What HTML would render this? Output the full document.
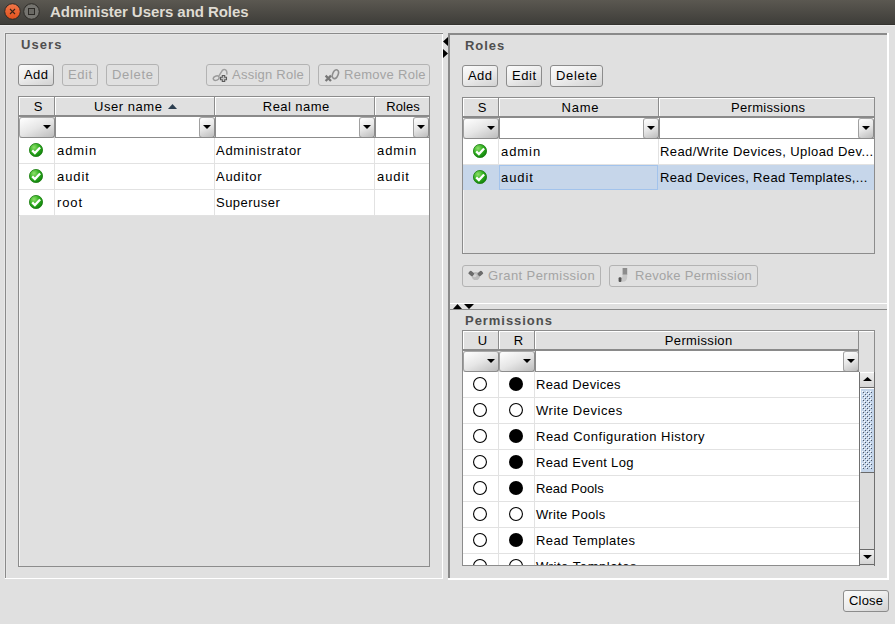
<!DOCTYPE html><html><head><meta charset="utf-8"><title>Administer Users and Roles</title><style>
*{margin:0;padding:0;box-sizing:border-box}
html,body{width:895px;height:624px;overflow:hidden;background:#e0e0e0;position:relative;font-family:"Liberation Sans", sans-serif}
.a{position:absolute}
.t{position:absolute;font-size:13px;line-height:15px;letter-spacing:0.45px;color:#000;white-space:nowrap}
.c{text-align:center}
.dtx{color:#a4a4a4}
.lbl{position:absolute;font-size:13px;line-height:15px;font-weight:bold;letter-spacing:0.8px;color:#4f4f4f;white-space:nowrap}
.btn{position:absolute;border:1px solid #8c8c8c;border-radius:3px;background:linear-gradient(160deg,#fbfbfb 0%,#ededed 45%,#d2d2d2 100%);box-sizing:content-box}
.btn.dis{border-color:#b3b3b3;background:#e0e0e0}
.cb{position:absolute;border:1px solid #8c8c8c;border-top-color:#a8a8a8;border-left-color:#a0a0a0;border-radius:3px;background:linear-gradient(155deg,#ffffff 0%,#e6e6e6 50%,#bcbcbc 100%)}
</style></head><body>
<div class="a" style="left:0px;top:0px;width:895px;height:25px;background:linear-gradient(#5b5851,#3d3c38)"></div>
<div class="a" style="left:0px;top:24px;width:895px;height:1px;background:#34332f"></div>
<div class="a" style="left:0px;top:25px;width:895px;height:1px;background:#ebebeb"></div>
<svg class="a" style="left:4px;top:3px" width="18" height="18" viewBox="0 0 18 18"><defs><linearGradient id="cg" x1="0" y1="0" x2="0" y2="1"><stop offset="0" stop-color="#f0784a"/><stop offset="1" stop-color="#e2501c"/></linearGradient></defs><circle cx="8.5" cy="8.5" r="7.8" fill="url(#cg)" stroke="#2c2a26" stroke-width="1"/><path d="M6 6L11 11M11 6L6 11" stroke="#3a2418" stroke-width="1.1"/></svg>
<svg class="a" style="left:23px;top:3px" width="18" height="18" viewBox="0 0 18 18"><circle cx="8.5" cy="8.5" r="7.8" fill="#75746f" stroke="#2c2a26" stroke-width="1"/><rect x="5.5" y="5.5" width="6" height="6" fill="#6a6964" stroke="#2c2a26" stroke-width="1"/></svg>
<div class="a" style="left:50px;top:3px;font-size:15px;line-height:17px;font-weight:bold;color:#dfdbd2;white-space:nowrap;letter-spacing:-0.06px">Administer Users and Roles</div>
<div class="a" style="left:4px;top:32px;width:439px;height:1px;background:#e8e8e8"></div>
<div class="a" style="left:4px;top:32px;width:1px;height:547px;background:#e8e8e8"></div>
<div class="a" style="left:5px;top:33px;width:438px;height:1px;background:#8a8a8a"></div>
<div class="a" style="left:5px;top:33px;width:1px;height:545px;background:#8a8a8a"></div>
<div class="a" style="left:6px;top:34px;width:436px;height:1px;background:#e6e6e6"></div>
<div class="a" style="left:6px;top:34px;width:1px;height:544px;background:#e6e6e6"></div>
<div class="a" style="left:442px;top:34px;width:1px;height:545px;background:#ffffff"></div>
<div class="a" style="left:5px;top:578px;width:438px;height:1px;background:#ffffff"></div>
<div class="lbl" style="left:21px;top:37px;letter-spacing:1.078px">Users</div>
<div class="btn" style="left:18px;top:64px;width:34px;height:20px;"></div>
<div class="t c" style="left:-113.7345px;width:300px;top:67px;letter-spacing:0.531px;">Add</div>
<div class="btn dis" style="left:62px;top:64px;width:34px;height:20px;"></div>
<div class="t dtx c" style="left:-69.7005px;width:300px;top:67px;letter-spacing:0.599px;">Edit</div>
<div class="btn dis" style="left:106px;top:64px;width:51px;height:20px;"></div>
<div class="t dtx c" style="left:-17.153px;width:300px;top:67px;letter-spacing:0.694px;">Delete</div>
<div class="btn dis" style="left:206px;top:64px;width:102px;height:20px;"></div>
<svg class="a" style="left:212px;top:68px" width="16" height="15" viewBox="0 0 16 15"><ellipse cx="4.2" cy="10.2" rx="3" ry="2.1" transform="rotate(-22 4.2 10.2)" fill="none" stroke="#9a9a9a" stroke-width="1.5"/><path d="M6.8 8.2L10.2 2.6Q11.8 0.9 13.6 1.8Q15.3 3 14.8 6.6" fill="none" stroke="#a0a0a0" stroke-width="1.5"/><path d="M10.3 7.5H12.7V9.3H14.5V11.7H12.7V13.5H10.3V11.7H8.5V9.3H10.3Z" fill="#c4c4c4" stroke="#5a5a5a" stroke-width="1.1"/></svg>
<div class="t dtx" style="left:232px;top:67px;letter-spacing:0.241px;">Assign Role</div>
<div class="btn dis" style="left:318px;top:64px;width:110px;height:20px;"></div>
<svg class="a" style="left:324px;top:68px" width="16" height="15" viewBox="0 0 16 15"><ellipse cx="11.4" cy="6.2" rx="2.7" ry="4.6" transform="rotate(22 11.4 6.2)" fill="none" stroke="#8e8e8e" stroke-width="1.6"/><path d="M1.6 7.6L7 13M7 7.6L1.6 13" stroke="#777" stroke-width="2.3"/></svg>
<div class="t dtx" style="left:344px;top:67px;letter-spacing:0.281px;">Remove Role</div>
<div class="a" style="left:18px;top:96px;width:412px;height:471px;border:1px solid #8c8c8c;background:#e0e0e0"></div>
<div class="a" style="left:19px;top:97px;width:410px;height:1px;background:#ffffff"></div>
<div class="a" style="left:19px;top:97px;width:1px;height:469px;background:#f4f4f4"></div>
<div class="a" style="left:19px;top:97px;width:35px;height:18px;background:#e0e0e0;border-top:1px solid #fff;border-left:1px solid #fff"></div>
<div class="a" style="left:54px;top:97px;width:1px;height:19px;background:#8c8c8c"></div>
<div class="a" style="left:55px;top:97px;width:159px;height:18px;background:#e0e0e0;border-top:1px solid #fff;border-left:1px solid #fff"></div>
<div class="a" style="left:214px;top:97px;width:1px;height:19px;background:#8c8c8c"></div>
<div class="a" style="left:215px;top:97px;width:159px;height:18px;background:#e0e0e0;border-top:1px solid #fff;border-left:1px solid #fff"></div>
<div class="a" style="left:374px;top:97px;width:1px;height:19px;background:#8c8c8c"></div>
<div class="a" style="left:375px;top:97px;width:54px;height:18px;background:#e0e0e0;border-top:1px solid #fff;border-left:1px solid #fff"></div>
<div class="a" style="left:19px;top:115px;width:411px;height:2px;background:#8a8a8a"></div>
<div class="t c" style="left:-112.0px;width:300px;top:99px;letter-spacing:0px;">S</div>
<div class="t c" style="left:-21.7305px;width:300px;top:99px;letter-spacing:0.539px;">User name</div>
<svg class="a" style="left:167.5px;top:104px" width="9" height="5"><path d="M0 5H9L4.5 0Z" fill="#2c3e50"/></svg>
<div class="t c" style="left:146.216px;width:300px;top:99px;letter-spacing:0.432px;">Real name</div>
<div class="t c" style="left:253.0235px;width:300px;top:99px;letter-spacing:0.047px;">Roles</div>
<div class="cb" style="left:19px;top:117px;width:36px;height:21px;"></div>
<svg class="a" style="left:43.0px;top:125px" width="8" height="4"><path d="M0 0H8L4.0 4Z" fill="#000"/></svg>
<div class="a" style="left:55px;top:117px;width:160px;height:21px;background:#fff;border-left:1px solid #8c8c8c;border-bottom:1px solid #8c8c8c"></div>
<div class="cb" style="left:199px;top:117px;width:16px;height:21px;"></div>
<svg class="a" style="left:203.0px;top:125px" width="8" height="4"><path d="M0 0H8L4.0 4Z" fill="#000"/></svg>
<div class="a" style="left:215px;top:117px;width:160px;height:21px;background:#fff;border-left:1px solid #8c8c8c;border-bottom:1px solid #8c8c8c"></div>
<div class="cb" style="left:359px;top:117px;width:16px;height:21px;"></div>
<svg class="a" style="left:363.0px;top:125px" width="8" height="4"><path d="M0 0H8L4.0 4Z" fill="#000"/></svg>
<div class="a" style="left:375px;top:117px;width:54px;height:21px;background:#fff;border-left:1px solid #8c8c8c;border-bottom:1px solid #8c8c8c"></div>
<div class="cb" style="left:413px;top:117px;width:16px;height:21px;"></div>
<svg class="a" style="left:417.0px;top:125px" width="8" height="4"><path d="M0 0H8L4.0 4Z" fill="#000"/></svg>
<div class="a" style="left:19px;top:138px;width:410px;height:26px;background:#fff"></div>
<div class="a" style="left:19px;top:163px;width:410px;height:1px;background:#e2e2e2"></div>
<div class="a" style="left:54px;top:138px;width:1px;height:26px;background:#e2e2e2"></div>
<div class="a" style="left:214px;top:138px;width:1px;height:26px;background:#e2e2e2"></div>
<div class="a" style="left:374px;top:138px;width:1px;height:26px;background:#e2e2e2"></div>
<svg class="a" style="left:29px;top:143px" width="14" height="14" viewBox="0 0 14 14"><defs><radialGradient id="gchk" cx="0.35" cy="0.3" r="0.8"><stop offset="0" stop-color="#8ee06a"/><stop offset="0.5" stop-color="#2eae1e"/><stop offset="1" stop-color="#0a7a0a"/></radialGradient></defs><circle cx="7" cy="7" r="6.6" fill="url(#gchk)" stroke="#1d7d12" stroke-width="0.8"/><path d="M3.2 7.4L5.9 10.1L11.1 4.5" fill="none" stroke="#fff" stroke-width="2.3"/></svg>
<div class="t" style="left:57px;top:143px;letter-spacing:0.934px;">admin</div>
<div class="t" style="left:216px;top:143px;letter-spacing:0.717px;">Administrator</div>
<div class="t" style="left:377px;top:143px;letter-spacing:0.934px;">admin</div>
<div class="a" style="left:19px;top:164px;width:410px;height:26px;background:#fff"></div>
<div class="a" style="left:19px;top:189px;width:410px;height:1px;background:#e2e2e2"></div>
<div class="a" style="left:54px;top:164px;width:1px;height:26px;background:#e2e2e2"></div>
<div class="a" style="left:214px;top:164px;width:1px;height:26px;background:#e2e2e2"></div>
<div class="a" style="left:374px;top:164px;width:1px;height:26px;background:#e2e2e2"></div>
<svg class="a" style="left:29px;top:169px" width="14" height="14" viewBox="0 0 14 14"><defs><radialGradient id="gchk" cx="0.35" cy="0.3" r="0.8"><stop offset="0" stop-color="#8ee06a"/><stop offset="0.5" stop-color="#2eae1e"/><stop offset="1" stop-color="#0a7a0a"/></radialGradient></defs><circle cx="7" cy="7" r="6.6" fill="url(#gchk)" stroke="#1d7d12" stroke-width="0.8"/><path d="M3.2 7.4L5.9 10.1L11.1 4.5" fill="none" stroke="#fff" stroke-width="2.3"/></svg>
<div class="t" style="left:57px;top:169px;letter-spacing:0.922px;">audit</div>
<div class="t" style="left:216px;top:169px;letter-spacing:0.727px;">Auditor</div>
<div class="t" style="left:377px;top:169px;letter-spacing:0.922px;">audit</div>
<div class="a" style="left:19px;top:190px;width:410px;height:26px;background:#fff"></div>
<div class="a" style="left:19px;top:215px;width:410px;height:1px;background:#e2e2e2"></div>
<div class="a" style="left:54px;top:190px;width:1px;height:26px;background:#e2e2e2"></div>
<div class="a" style="left:214px;top:190px;width:1px;height:26px;background:#e2e2e2"></div>
<div class="a" style="left:374px;top:190px;width:1px;height:26px;background:#e2e2e2"></div>
<svg class="a" style="left:29px;top:195px" width="14" height="14" viewBox="0 0 14 14"><defs><radialGradient id="gchk" cx="0.35" cy="0.3" r="0.8"><stop offset="0" stop-color="#8ee06a"/><stop offset="0.5" stop-color="#2eae1e"/><stop offset="1" stop-color="#0a7a0a"/></radialGradient></defs><circle cx="7" cy="7" r="6.6" fill="url(#gchk)" stroke="#1d7d12" stroke-width="0.8"/><path d="M3.2 7.4L5.9 10.1L11.1 4.5" fill="none" stroke="#fff" stroke-width="2.3"/></svg>
<div class="t" style="left:57px;top:195px;letter-spacing:0.88px;">root</div>
<div class="t" style="left:216px;top:195px;letter-spacing:0.486px;">Superuser</div>
<div class="t" style="left:377px;top:195px;letter-spacing:0px;"></div>
<svg class="a" style="left:443px;top:37px" width="5" height="21"><path d="M5 0V9L0 4.5Z M0 12V21L5 16.5Z" fill="#000"/></svg>
<div class="a" style="left:448px;top:33px;width:441px;height:2px;background:#8a8a8a"></div>
<div class="a" style="left:448px;top:33px;width:2px;height:545px;background:#8a8a8a"></div>
<div class="a" style="left:887px;top:33px;width:2px;height:547px;background:#ffffff"></div>
<div class="a" style="left:448px;top:578px;width:441px;height:2px;background:#ffffff"></div>
<div class="lbl" style="left:465px;top:38px;letter-spacing:0.945px">Roles</div>
<div class="btn" style="left:462px;top:65px;width:34px;height:20px;"></div>
<div class="t c" style="left:330.2655px;width:300px;top:68px;letter-spacing:0.531px;">Add</div>
<div class="btn" style="left:506px;top:65px;width:34px;height:20px;"></div>
<div class="t c" style="left:374.2995px;width:300px;top:68px;letter-spacing:0.599px;">Edit</div>
<div class="btn" style="left:550px;top:65px;width:51px;height:20px;"></div>
<div class="t c" style="left:426.847px;width:300px;top:68px;letter-spacing:0.694px;">Delete</div>
<div class="a" style="left:462px;top:97px;width:413px;height:157px;border:1px solid #8c8c8c;background:#e0e0e0"></div>
<div class="a" style="left:463px;top:98px;width:411px;height:1px;background:#ffffff"></div>
<div class="a" style="left:463px;top:98px;width:1px;height:155px;background:#f4f4f4"></div>
<div class="a" style="left:463px;top:98px;width:35px;height:18px;background:#e0e0e0;border-top:1px solid #fff;border-left:1px solid #fff"></div>
<div class="a" style="left:498px;top:98px;width:1px;height:19px;background:#8c8c8c"></div>
<div class="a" style="left:499px;top:98px;width:159px;height:18px;background:#e0e0e0;border-top:1px solid #fff;border-left:1px solid #fff"></div>
<div class="a" style="left:658px;top:98px;width:1px;height:19px;background:#8c8c8c"></div>
<div class="a" style="left:659px;top:98px;width:215px;height:18px;background:#e0e0e0;border-top:1px solid #fff;border-left:1px solid #fff"></div>
<div class="a" style="left:463px;top:116px;width:412px;height:2px;background:#8a8a8a"></div>
<div class="t c" style="left:332.0px;width:300px;top:100px;letter-spacing:0px;">S</div>
<div class="t c" style="left:430.362px;width:300px;top:100px;letter-spacing:0.724px;">Name</div>
<div class="t c" style="left:618.1545px;width:300px;top:100px;letter-spacing:0.309px;">Permissions</div>
<div class="cb" style="left:463px;top:118px;width:36px;height:21px;"></div>
<svg class="a" style="left:487.0px;top:126px" width="8" height="4"><path d="M0 0H8L4.0 4Z" fill="#000"/></svg>
<div class="a" style="left:499px;top:118px;width:160px;height:21px;background:#fff;border-left:1px solid #8c8c8c;border-bottom:1px solid #8c8c8c"></div>
<div class="cb" style="left:643px;top:118px;width:16px;height:21px;"></div>
<svg class="a" style="left:647.0px;top:126px" width="8" height="4"><path d="M0 0H8L4.0 4Z" fill="#000"/></svg>
<div class="a" style="left:659px;top:118px;width:215px;height:21px;background:#fff;border-left:1px solid #8c8c8c;border-bottom:1px solid #8c8c8c"></div>
<div class="cb" style="left:858px;top:118px;width:16px;height:21px;"></div>
<svg class="a" style="left:862.0px;top:126px" width="8" height="4"><path d="M0 0H8L4.0 4Z" fill="#000"/></svg>
<div class="a" style="left:463px;top:139px;width:411px;height:26px;background:#fff"></div>
<div class="a" style="left:463px;top:164px;width:411px;height:1px;background:#e2e2e2"></div>
<div class="a" style="left:498px;top:139px;width:1px;height:26px;background:#e2e2e2"></div>
<div class="a" style="left:658px;top:139px;width:1px;height:26px;background:#e2e2e2"></div>
<svg class="a" style="left:473px;top:144px" width="14" height="14" viewBox="0 0 14 14"><defs><radialGradient id="gchk" cx="0.35" cy="0.3" r="0.8"><stop offset="0" stop-color="#8ee06a"/><stop offset="0.5" stop-color="#2eae1e"/><stop offset="1" stop-color="#0a7a0a"/></radialGradient></defs><circle cx="7" cy="7" r="6.6" fill="url(#gchk)" stroke="#1d7d12" stroke-width="0.8"/><path d="M3.2 7.4L5.9 10.1L11.1 4.5" fill="none" stroke="#fff" stroke-width="2.3"/></svg>
<div class="t" style="left:501px;top:144px;letter-spacing:0.934px;">admin</div>
<div class="t" style="left:660px;top:144px;letter-spacing:0.422px;">Read/Write Devices, Upload Dev...</div>
<div class="a" style="left:463px;top:165px;width:411px;height:25px;background:#c6d6ea"></div>
<div class="a" style="left:499px;top:165px;width:159px;height:25px;border:1px solid #a2c3ec"></div>
<svg class="a" style="left:473px;top:170px" width="14" height="14" viewBox="0 0 14 14"><defs><radialGradient id="gchk" cx="0.35" cy="0.3" r="0.8"><stop offset="0" stop-color="#8ee06a"/><stop offset="0.5" stop-color="#2eae1e"/><stop offset="1" stop-color="#0a7a0a"/></radialGradient></defs><circle cx="7" cy="7" r="6.6" fill="url(#gchk)" stroke="#1d7d12" stroke-width="0.8"/><path d="M3.2 7.4L5.9 10.1L11.1 4.5" fill="none" stroke="#fff" stroke-width="2.3"/></svg>
<div class="t" style="left:501px;top:170px;letter-spacing:0.922px;">audit</div>
<div class="t" style="left:660px;top:170px;letter-spacing:0.355px;">Read Devices, Read Templates,...</div>
<div class="btn dis" style="left:462px;top:265px;width:137px;height:20px;"></div>
<svg class="a" style="left:468px;top:269px" width="16" height="12" viewBox="0 0 16 12"><ellipse cx="7.8" cy="7" rx="4.2" ry="4.1" fill="#bcbcbc"/><ellipse cx="6.6" cy="6.6" rx="2" ry="1.6" fill="#d4d4d4"/><rect x="1.3" y="1.8" width="4" height="5.4" rx="1.2" transform="rotate(-50 3.3 4.5)" fill="#6c6c6c"/><rect x="10.3" y="1.8" width="4" height="5.4" rx="1.2" transform="rotate(50 12.3 4.5)" fill="#6c6c6c"/></svg>
<div class="t dtx" style="left:488px;top:268px;letter-spacing:0.416px;">Grant Permission</div>
<div class="btn dis" style="left:609px;top:265px;width:147px;height:20px;"></div>
<svg class="a" style="left:618px;top:268px" width="10" height="14" viewBox="0 0 10 14"><rect x="4.6" y="0" width="4.6" height="7" fill="#8c8c8c"/><path d="M4.6 6.5H9.2V9Q9.2 13.5 4.5 13.8L2.6 13.8V9.8Q4.6 9.8 4.6 8Z" fill="#c6c6c6"/><rect x="0.6" y="9.2" width="2.8" height="4.8" rx="1" fill="#555"/></svg>
<div class="t dtx" style="left:635px;top:268px;letter-spacing:0.291px;">Revoke Permission</div>
<div class="a" style="left:450px;top:303px;width:437px;height:1px;background:#ffffff"></div>
<div class="a" style="left:450px;top:309px;width:437px;height:1px;background:#8a8a8a"></div>
<svg class="a" style="left:453px;top:304px" width="22" height="5"><path d="M0 5H9L4.5 0Z M11 0H21L16 5Z" fill="#000"/></svg>
<div class="lbl" style="left:465px;top:313px;letter-spacing:0.959px">Permissions</div>
<div class="a" style="left:462px;top:330px;width:413px;height:236px;border:1px solid #8c8c8c;background:#e0e0e0"></div>
<div class="a" style="left:463px;top:331px;width:411px;height:1px;background:#ffffff"></div>
<div class="a" style="left:463px;top:331px;width:1px;height:234px;background:#f4f4f4"></div>
<div class="a" style="left:463px;top:331px;width:35px;height:18px;background:#e0e0e0;border-top:1px solid #fff;border-left:1px solid #fff"></div>
<div class="a" style="left:498px;top:331px;width:1px;height:19px;background:#8c8c8c"></div>
<div class="a" style="left:499px;top:331px;width:35px;height:18px;background:#e0e0e0;border-top:1px solid #fff;border-left:1px solid #fff"></div>
<div class="a" style="left:534px;top:331px;width:1px;height:19px;background:#8c8c8c"></div>
<div class="a" style="left:535px;top:331px;width:323px;height:18px;background:#e0e0e0;border-top:1px solid #fff;border-left:1px solid #fff"></div>
<div class="a" style="left:858px;top:331px;width:1px;height:19px;background:#8c8c8c"></div>
<div class="a" style="left:463px;top:349px;width:396px;height:2px;background:#8a8a8a"></div>
<div class="a" style="left:858px;top:331px;width:1px;height:41px;background:#8c8c8c"></div>
<div class="t c" style="left:332.5px;width:300px;top:333px;letter-spacing:0px;">U</div>
<div class="t c" style="left:368.5px;width:300px;top:333px;letter-spacing:0px;">R</div>
<div class="t c" style="left:548.671px;width:300px;top:333px;letter-spacing:0.342px;">Permission</div>
<div class="cb" style="left:463px;top:351px;width:36px;height:21px;"></div>
<svg class="a" style="left:487.0px;top:359px" width="8" height="4"><path d="M0 0H8L4.0 4Z" fill="#000"/></svg>
<div class="cb" style="left:499px;top:351px;width:36px;height:21px;"></div>
<svg class="a" style="left:523.0px;top:359px" width="8" height="4"><path d="M0 0H8L4.0 4Z" fill="#000"/></svg>
<div class="a" style="left:535px;top:351px;width:323px;height:21px;background:#fff;border-left:1px solid #8c8c8c;border-bottom:1px solid #8c8c8c"></div>
<div class="cb" style="left:843px;top:351px;width:16px;height:21px;"></div>
<svg class="a" style="left:847.0px;top:359px" width="8" height="4"><path d="M0 0H8L4.0 4Z" fill="#000"/></svg>
<div class="a" style="left:463px;top:372px;width:396px;height:193px;overflow:hidden">
<div class="a" style="left:0;top:0px;width:396px;height:26px;background:#fff;border-bottom:1px solid #e2e2e2"></div>
<div class="a" style="left:35px;top:0px;width:1px;height:26px;background:#e2e2e2"></div>
<div class="a" style="left:71px;top:0px;width:1px;height:26px;background:#e2e2e2"></div>
<svg class="a" style="left:10px;top:5px" width="14" height="14"><circle cx="7" cy="7" r="6.45" fill="#fff" stroke="#000" stroke-width="1.1"/></svg>
<svg class="a" style="left:46px;top:5px" width="14" height="14"><circle cx="7" cy="7" r="7" fill="#000"/></svg>
<div class="t" style="left:73px;top:5px;letter-spacing:0.334px">Read Devices</div>
<div class="a" style="left:0;top:26px;width:396px;height:26px;background:#fff;border-bottom:1px solid #e2e2e2"></div>
<div class="a" style="left:35px;top:26px;width:1px;height:26px;background:#e2e2e2"></div>
<div class="a" style="left:71px;top:26px;width:1px;height:26px;background:#e2e2e2"></div>
<svg class="a" style="left:10px;top:31px" width="14" height="14"><circle cx="7" cy="7" r="6.45" fill="#fff" stroke="#000" stroke-width="1.1"/></svg>
<svg class="a" style="left:46px;top:31px" width="14" height="14"><circle cx="7" cy="7" r="6.45" fill="#fff" stroke="#000" stroke-width="1.1"/></svg>
<div class="t" style="left:73px;top:31px;letter-spacing:0.522px">Write Devices</div>
<div class="a" style="left:0;top:52px;width:396px;height:26px;background:#fff;border-bottom:1px solid #e2e2e2"></div>
<div class="a" style="left:35px;top:52px;width:1px;height:26px;background:#e2e2e2"></div>
<div class="a" style="left:71px;top:52px;width:1px;height:26px;background:#e2e2e2"></div>
<svg class="a" style="left:10px;top:57px" width="14" height="14"><circle cx="7" cy="7" r="6.45" fill="#fff" stroke="#000" stroke-width="1.1"/></svg>
<svg class="a" style="left:46px;top:57px" width="14" height="14"><circle cx="7" cy="7" r="7" fill="#000"/></svg>
<div class="t" style="left:73px;top:57px;letter-spacing:0.498px">Read Configuration History</div>
<div class="a" style="left:0;top:78px;width:396px;height:26px;background:#fff;border-bottom:1px solid #e2e2e2"></div>
<div class="a" style="left:35px;top:78px;width:1px;height:26px;background:#e2e2e2"></div>
<div class="a" style="left:71px;top:78px;width:1px;height:26px;background:#e2e2e2"></div>
<svg class="a" style="left:10px;top:83px" width="14" height="14"><circle cx="7" cy="7" r="6.45" fill="#fff" stroke="#000" stroke-width="1.1"/></svg>
<svg class="a" style="left:46px;top:83px" width="14" height="14"><circle cx="7" cy="7" r="7" fill="#000"/></svg>
<div class="t" style="left:73px;top:83px;letter-spacing:0.323px">Read Event Log</div>
<div class="a" style="left:0;top:104px;width:396px;height:26px;background:#fff;border-bottom:1px solid #e2e2e2"></div>
<div class="a" style="left:35px;top:104px;width:1px;height:26px;background:#e2e2e2"></div>
<div class="a" style="left:71px;top:104px;width:1px;height:26px;background:#e2e2e2"></div>
<svg class="a" style="left:10px;top:109px" width="14" height="14"><circle cx="7" cy="7" r="6.45" fill="#fff" stroke="#000" stroke-width="1.1"/></svg>
<svg class="a" style="left:46px;top:109px" width="14" height="14"><circle cx="7" cy="7" r="7" fill="#000"/></svg>
<div class="t" style="left:73px;top:109px;letter-spacing:0.054px">Read Pools</div>
<div class="a" style="left:0;top:130px;width:396px;height:26px;background:#fff;border-bottom:1px solid #e2e2e2"></div>
<div class="a" style="left:35px;top:130px;width:1px;height:26px;background:#e2e2e2"></div>
<div class="a" style="left:71px;top:130px;width:1px;height:26px;background:#e2e2e2"></div>
<svg class="a" style="left:10px;top:135px" width="14" height="14"><circle cx="7" cy="7" r="6.45" fill="#fff" stroke="#000" stroke-width="1.1"/></svg>
<svg class="a" style="left:46px;top:135px" width="14" height="14"><circle cx="7" cy="7" r="6.45" fill="#fff" stroke="#000" stroke-width="1.1"/></svg>
<div class="t" style="left:73px;top:135px;letter-spacing:0.308px">Write Pools</div>
<div class="a" style="left:0;top:156px;width:396px;height:26px;background:#fff;border-bottom:1px solid #e2e2e2"></div>
<div class="a" style="left:35px;top:156px;width:1px;height:26px;background:#e2e2e2"></div>
<div class="a" style="left:71px;top:156px;width:1px;height:26px;background:#e2e2e2"></div>
<svg class="a" style="left:10px;top:161px" width="14" height="14"><circle cx="7" cy="7" r="6.45" fill="#fff" stroke="#000" stroke-width="1.1"/></svg>
<svg class="a" style="left:46px;top:161px" width="14" height="14"><circle cx="7" cy="7" r="7" fill="#000"/></svg>
<div class="t" style="left:73px;top:161px;letter-spacing:0.399px">Read Templates</div>
<div class="a" style="left:0;top:182px;width:396px;height:26px;background:#fff;border-bottom:1px solid #e2e2e2"></div>
<div class="a" style="left:35px;top:182px;width:1px;height:26px;background:#e2e2e2"></div>
<div class="a" style="left:71px;top:182px;width:1px;height:26px;background:#e2e2e2"></div>
<svg class="a" style="left:10px;top:187px" width="14" height="14"><circle cx="7" cy="7" r="6.45" fill="#fff" stroke="#000" stroke-width="1.1"/></svg>
<svg class="a" style="left:46px;top:187px" width="14" height="14"><circle cx="7" cy="7" r="6.45" fill="#fff" stroke="#000" stroke-width="1.1"/></svg>
<div class="t" style="left:73px;top:187px;letter-spacing:0.556px">Write Templates</div>
</div>
<div class="a" style="left:859px;top:372px;width:16px;height:194px;background:#dcdcdc;border-left:1px solid #707070;border-right:1px solid #707070"></div>
<div class="a" style="left:860px;top:372px;width:14px;height:16px;background:linear-gradient(#ececec,#d6d6d6);border-top:1px solid #fff;border-bottom:1px solid #6a6a6a"></div>
<svg class="a" style="left:862.5px;top:377px" width="9" height="4"><path d="M0 4H9L4.5 0Z" fill="#000"/></svg>
<div class="a" style="left:860px;top:388px;width:14px;height:85px;border-top:1px solid #fff;border-left:1px solid #fff;border-bottom:1px solid #6a6a6a;background:#c4d5ea"></div>
<svg class="a" style="left:862px;top:391px" width="10" height="78"><defs><pattern id="dots" x="0" y="0" width="4" height="4" patternUnits="userSpaceOnUse"><rect x="0" y="0" width="1" height="1" fill="#fff"/><rect x="1" y="1" width="1" height="1" fill="#4c5666"/><rect x="2" y="2" width="1" height="1" fill="#fff"/><rect x="3" y="3" width="1" height="1" fill="#4c5666"/></pattern></defs><rect width="10" height="78" fill="url(#dots)"/></svg>
<div class="a" style="left:860px;top:549px;width:14px;height:16px;background:linear-gradient(#f0f0f0,#d4d4d4);border-top:1px solid #6a6a6a;border-bottom:1px solid #6a6a6a"></div>
<svg class="a" style="left:862.5px;top:555px" width="9" height="4"><path d="M0 0H9L4.5 4Z" fill="#000"/></svg>
<div class="btn" style="left:843px;top:590px;width:44px;height:20px;"></div>
<div class="t c" style="left:716.0995px;width:300px;top:593px;letter-spacing:0.199px;">Close</div>
</body></html>
